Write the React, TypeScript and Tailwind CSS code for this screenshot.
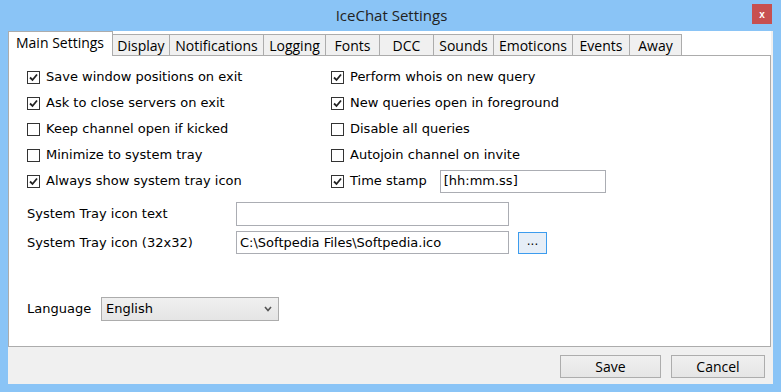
import React from "react";

const font = "font-['Tahoma','DejaVu_Sans',sans-serif]";

const tabs = [
  { label: "Display", w: "w-[57px]" },
  { label: "Notifications", w: "w-[94px]" },
  { label: "Logging", w: "w-[62px]" },
  { label: "Fonts", w: "w-[54px]" },
  { label: "DCC", w: "w-[54px]" },
  { label: "Sounds", w: "w-[60px]" },
  { label: "Emoticons", w: "w-[79px]" },
  { label: "Events", w: "w-[57px]" },
  { label: "Away", w: "w-[52px]" },
];

const Check: React.FC<{ checked?: boolean }> = ({ checked }) => (
  <span className="w-[13px] h-[13px] border border-[#333333] bg-white flex items-center justify-center shrink-0">
    {checked && (
      <svg width="9" height="9" viewBox="0 0 9 9">
        <path d="M1 4.5 L3.5 7 L8 1.5" fill="none" stroke="#222" strokeWidth="1.8" />
      </svg>
    )}
  </span>
);

const Row: React.FC<{ checked?: boolean; label: string; children?: React.ReactNode }> = ({
  checked,
  label,
  children,
}) => (
  <div className="h-[26px] flex items-center">
    <Check checked={checked} />
    <span className="ml-[6px] text-[13px] text-black">{label}</span>
    {children}
  </div>
);

const App: React.FC = () => {
  return (
    <div className={`w-[781px] h-[392px] bg-[#8ac4f6] flex flex-col ${font}`}>
      <div className="h-[31px] flex items-center relative">
        <div className="flex-1 text-center text-[15px] text-[#222] font-['Open_Sans',sans-serif] pl-[2px]">
          IceChat Settings
        </div>
        <div className="absolute right-[9px] top-[4px] w-[20px] h-[20px] bg-[#c75050] text-white text-[10px] font-bold flex items-center justify-center font-['Liberation_Sans',sans-serif]">
          x
        </div>
      </div>
      <div className="flex-1 mx-[8px] mb-[8px] bg-[#f0f0f0] flex flex-col">
        <div className="bg-white mr-[2px] flex flex-col h-[316px]">
          <div className="flex items-end h-[24px] font-['Open_Sans',sans-serif] text-[14px] text-black">
            <div className="w-[105px] h-[25px] bg-white border border-b-0 border-[#acacac] flex items-start pl-[7px] relative z-10 -mb-[1px]">
              Main Settings
            </div>
            {tabs.map((t) => (
              <div
                key={t.label}
                className={`${t.w} h-[21px] bg-[#f0f0f0] border border-l-0 border-[#acacac] border-b-0 flex items-center justify-center`}
              >
                {t.label}
              </div>
            ))}
          </div>
          <div className="flex-1 border border-[#acacac] bg-white pl-[18px] pt-[8px]">
            <div className="flex">
              <div className="w-[304px]">
                <Row checked label="Save window positions on exit" />
                <Row checked label="Ask to close servers on exit" />
                <Row label="Keep channel open if kicked" />
                <Row label="Minimize to system tray" />
                <Row checked label="Always show system tray icon" />
              </div>
              <div>
                <Row checked label="Perform whois on new query" />
                <Row checked label="New queries open in foreground" />
                <Row label="Disable all queries" />
                <Row label="Autojoin channel on invite" />
                <Row checked label="Time stamp">
                  <div className="ml-[13px] w-[166px] h-[23px] border border-[#abadb3] flex items-center px-[3px] text-[13px]">
                    [hh:mm.ss]
                  </div>
                </Row>
              </div>
            </div>
            <div className="mt-[8px] flex items-center text-[13px]">
              <span className="w-[209px]">System Tray icon text</span>
              <div className="w-[273px] h-[24px] border border-[#abadb3]" />
            </div>
            <div className="mt-[5px] flex items-center text-[13px]">
              <span className="w-[209px]">System Tray icon (32x32)</span>
              <div className="w-[273px] h-[23px] border border-[#abadb3] flex items-center px-[3px]">
                C:\Softpedia Files\Softpedia.ico
              </div>
              <div className="ml-[9px] w-[29px] h-[22px] border border-[#3c9cee] bg-[#e6eef7] flex items-center justify-center text-[12px] pb-[4px]">
                ...
              </div>
            </div>
            <div className="mt-[43px] flex items-center text-[13px]">
              <span className="w-[74px]">Language</span>
              <div className="w-[178px] h-[24px] border border-[#acacac] bg-gradient-to-b from-[#f0f0f0] to-[#e5e5e5] flex items-center pl-[4px] pr-[6px]">
                <span className="flex-1">English</span>
                <svg width="8" height="6" viewBox="0 0 8 6">
                  <path d="M1 1 L4 4.5 L7 1" fill="none" stroke="#555" strokeWidth="1.6" />
                </svg>
              </div>
            </div>
          </div>
        </div>
        <div className="flex-1 flex justify-end items-start pt-[8px] pr-[8px] gap-[10px] font-['Open_Sans',sans-serif] text-[14px]">
          <div className="w-[101px] h-[23px] border border-[#adadad] bg-gradient-to-b from-[#f0f0f0] to-[#e5e5e5] flex items-center justify-center">
            Save
          </div>
          <div className="w-[94px] h-[23px] border border-[#adadad] bg-gradient-to-b from-[#f0f0f0] to-[#e5e5e5] flex items-center justify-center">
            Cancel
          </div>
        </div>
      </div>
    </div>
  );
};

export default App;
